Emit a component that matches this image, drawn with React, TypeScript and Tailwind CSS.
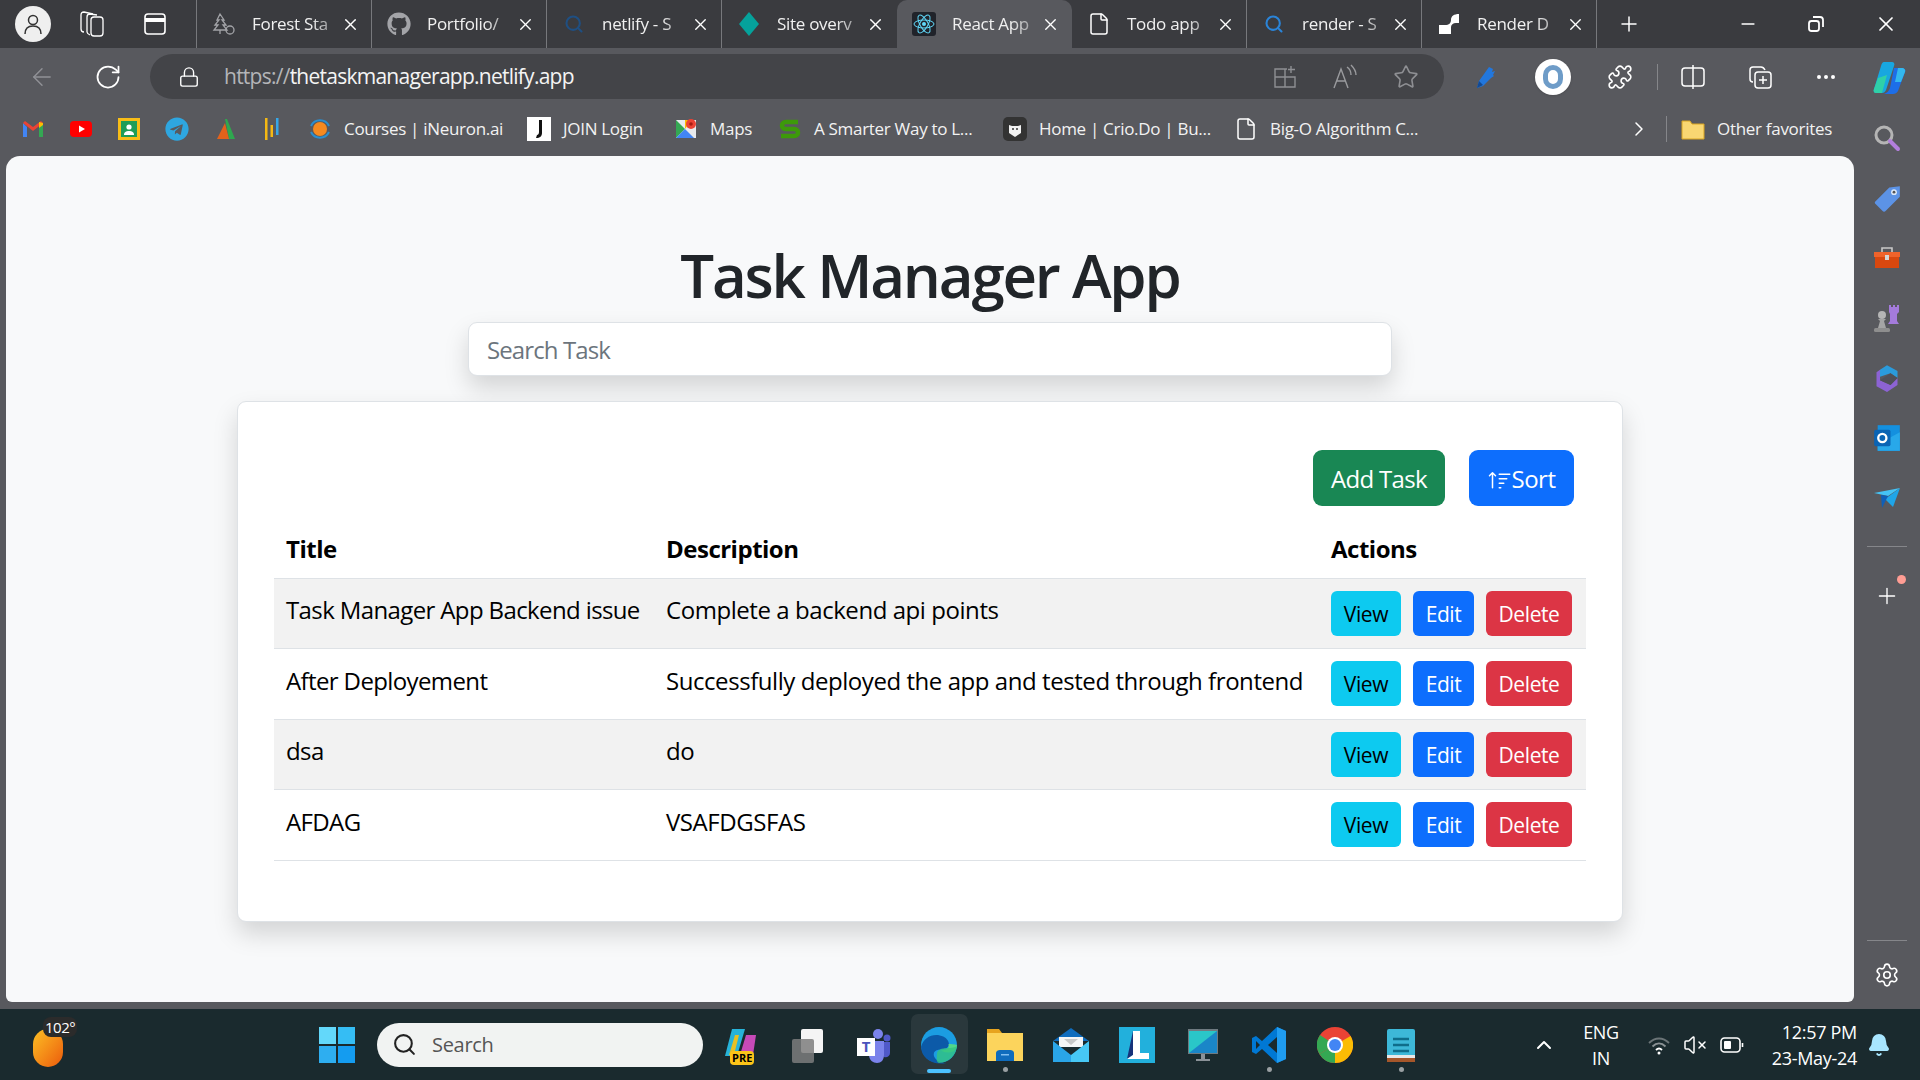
import { type ReactNode } from "react";
import {
  ArrowLeft,
  Bell,
  ChevronRight,
  ChevronUp,
  Ellipsis,
  File,
  Lock,
  Minus,
  Plus,
  Puzzle,
  RotateCw,
  Search,
  Settings,
  Star,
  VolumeX,
  X,
} from "lucide-react";
import { BsSortUp } from "react-icons/bs";
import { FaGithub, FaTelegram } from "react-icons/fa";

type IconProps = { className?: string };

function ReactLogo() {
  return (
    <svg viewBox="0 0 24 24" className="w-6 h-6">
      <rect width="24" height="24" rx="3" fill="#20232a" />
      <g fill="none" stroke="#61dafb" strokeWidth="1">
        <ellipse cx="12" cy="12" rx="10" ry="4" />
        <ellipse cx="12" cy="12" rx="10" ry="4" transform="rotate(60 12 12)" />
        <ellipse cx="12" cy="12" rx="10" ry="4" transform="rotate(120 12 12)" />
      </g>
      <circle cx="12" cy="12" r="2" fill="#61dafb" />
    </svg>
  );
}

function ForestIcon() {
  return (
    <svg viewBox="0 0 24 24" className="w-6 h-6" fill="none" stroke="#a3a4a8" strokeWidth="1.3">
      <path d="M8 2l4 6H10l4 5h-3l4 5H2l4-5H3l4-5H5z" />
      <path d="M8 18v4" />
      <circle cx="18" cy="18" r="4" />
    </svg>
  );
}

function Diamond() {
  return (
    <svg viewBox="0 0 24 24" className="w-6 h-6">
      <path d="M12 0l10 12-10 12L2 12z" fill="#05a29b" />
    </svg>
  );
}

function RenderLogo() {
  return (
    <svg viewBox="0 0 24 24" className="w-6 h-6" fill="#fff">
      <path d="M14 8c0-4 3-6 8-6v9h-3c-3 0-5 2-5 4v7H2v-9h6c4 0 6-2 6-5z" />
    </svg>
  );
}

function SearchTab({ color }: { color: string }) {
  return <Search className="w-5 h-5" color={color} strokeWidth={2.5} />;
}

function Workspaces() {
  return (
    <svg viewBox="0 0 26 28" className="w-[26px] h-[28px]" fill="none" stroke="#fff" strokeWidth="1.3">
      <path d="M14 4L5 2C3 2 2 3 2 5v14c0 2 1 3 3 3" />
      <path d="M18 5l-7-1c-2 0-3 1-3 3v15c0 1 1 2 3 3" />
      <rect x="12" y="7" width="12" height="19" rx="3" />
    </svg>
  );
}

function TabActions() {
  return (
    <svg viewBox="0 0 24 24" className="w-[24px] h-[24px]" fill="none" stroke="#fff" strokeWidth="1.6">
      <rect x="2" y="2" width="20" height="20" rx="3" />
      <path d="M2 8h20" strokeWidth="4" />
    </svg>
  );
}

function RestoreIcon() {
  return (
    <svg viewBox="0 0 18 18" className="w-[18px] h-[18px]" fill="none" stroke="#fff" strokeWidth="1.8">
      <rect x="2" y="6" width="10" height="10" rx="2.5" />
      <path d="M6 2h7c2 0 3 1 3 3v7" />
    </svg>
  );
}

function AppsAdd() {
  return (
    <svg viewBox="0 0 24 24" className="w-6 h-6" fill="none" stroke="#8e8f93" strokeWidth="1.4">
      <path d="M14 4H2v18h20V12H2M12 4v18M18 1v7M15 4.5h7" />
    </svg>
  );
}

function ReadAloud() {
  return (
    <svg viewBox="0 0 26 26" className="w-[26px] h-[26px]" fill="none" stroke="#9a9b9e" strokeWidth="1.4">
      <path d="M2 24L9 5l7 19M5 17h8" />
      <path d="M15 3c3 2 4 5 4 8M19 1c3 3 5 6 5 10" />
    </svg>
  );
}

function SplitScreen() {
  return (
    <svg viewBox="0 0 26 26" className="w-[26px] h-[26px]" fill="none" stroke="#fff" strokeWidth="1.5">
      <rect x="2" y="4" width="22" height="18" rx="3" />
      <path d="M13 1v24" />
    </svg>
  );
}

function Collections() {
  return (
    <svg viewBox="0 0 26 26" className="w-[26px] h-[26px]" fill="none" stroke="#fff" strokeWidth="1.5">
      <path d="M6 18c-2 0-3-1-3-3V6c0-2 1-3 3-3h8c2 0 3 1 4 3" />
      <rect x="8" y="8" width="16" height="16" rx="3" />
      <path d="M16 12v8M12 16h8" />
    </svg>
  );
}

function CopilotLogo({ className = "w-[34px] h-[36px]" }: IconProps) {
  return (
    <svg viewBox="0 0 34 36" className={className}>
      <path d="M12 3h8c2 0 3 2 2 4l-8 24c-1 2-2 3-4 3H4c-2 0-3-2-2-4l7-23c.5-2 1.5-4 3-4z" fill="#18a7e0" />
      <path d="M4 34c-2 0-3-2-2-4l4-11 9-3-5 18z" fill="#2fd0a8" />
      <path d="M22 9h8c2 0 4 2 3 4l-7 19c-1 2-3 3-5 3H12c3-1 5-3 6-6z" fill="#1d6ee8" />
      <path d="M26 9h4c2 0 4 2 3 4l-4 10h-6z" fill="#33b8ee" />
    </svg>
  );
}

function GmailIcon() {
  return (
    <svg viewBox="0 0 24 24" className="w-6 h-6">
      <path d="M2 6v14h4V10z" fill="#4285f4" />
      <path d="M18 10v10h4V6z" fill="#34a853" />
      <path d="M2 6l10 8 10-8-2-2-8 6-8-6z" fill="#ea4335" />
      <path d="M18 5l4 1v2l-4 3z" fill="#fbbc04" />
    </svg>
  );
}

function YoutubeIcon() {
  return (
    <svg viewBox="0 0 24 24" className="w-6 h-6">
      <rect x="1" y="4" width="22" height="16" rx="4" fill="#f00" />
      <path d="M10 8.5l6 3.5-6 3.5z" fill="#fff" />
    </svg>
  );
}

function ClassroomIcon() {
  return (
    <svg viewBox="0 0 24 24" className="w-6 h-6">
      <rect x="1" y="1" width="22" height="22" fill="#f8bd17" />
      <rect x="4" y="4" width="16" height="16" fill="#1f9d58" />
      <circle cx="12" cy="10" r="2.6" fill="#fff" />
      <path d="M7 18c0-3 2-4 5-4s5 1 5 4z" fill="#fff" />
    </svg>
  );
}

function PyramidIcon() {
  return (
    <svg viewBox="0 0 24 24" className="w-6 h-6">
      <path d="M12 2l2 0 8 20h-6z" fill="#2fa84f" />
      <path d="M12 6L4 22h12z" fill="#e2621b" />
    </svg>
  );
}

function BarsIcon() {
  return (
    <svg viewBox="0 0 24 24" className="w-6 h-6">
      <rect x="5" y="1" width="2.5" height="22" fill="#f5b914" />
      <rect x="16" y="1" width="2.5" height="17" fill="#35a7e8" />
      <rect x="10.5" y="8" width="2.5" height="12" fill="#f5b914" />
    </svg>
  );
}

function INeuronIcon() {
  return (
    <svg viewBox="0 0 24 24" className="w-6 h-6">
      <circle cx="12" cy="12" r="7" fill="#f58a1f" />
      <path d="M3 9a10 10 0 0 1 18 0M3 15a10 10 0 0 0 18 0" fill="none" stroke="#2a8fd0" strokeWidth="2" />
    </svg>
  );
}

function JoinIcon() {
  return (
    <svg viewBox="0 0 24 24" className="w-6 h-6">
      <rect width="24" height="24" fill="#fff" />
      <path d="M15 3v13c0 3-2 5-6 5l1-3c1 0 2-1 2-3V3z" fill="#111" />
    </svg>
  );
}

function MapsIcon() {
  return (
    <svg viewBox="0 0 24 24" className="w-6 h-6">
      <path d="M2 3h20v18H2z" fill="#e8eaed" />
      <path d="M2 3l9 9-9 9z" fill="#34a853" />
      <path d="M2 21l9-9 9 9z" fill="#4285f4" />
      <path d="M11 12l7-9h-7z" fill="#fbbc04" />
      <circle cx="17" cy="7" r="5" fill="#ea4335" />
      <circle cx="17" cy="7" r="1.8" fill="#a61c14" />
    </svg>
  );
}

function GreenSIcon() {
  return (
    <svg viewBox="0 0 24 24" className="w-6 h-6" fill="none" stroke="#3d9a0a" strokeWidth="4.5">
      <path d="M20 5H8c-3 0-4 2-4 3.5S5 12 8 12h8c3 0 4 2 4 3.5S19 19 16 19H3" />
    </svg>
  );
}

function CrioIcon() {
  return (
    <svg viewBox="0 0 24 24" className="w-6 h-6">
      <rect width="24" height="24" rx="5" fill="#333" />
      <path d="M6 8l3 1h6l3-1v8l-6 4-6-4z" fill="#f2f2f2" />
      <circle cx="10" cy="12" r="1" fill="#333" />
      <circle cx="14" cy="12" r="1" fill="#333" />
    </svg>
  );
}

function FolderIcon() {
  return (
    <svg viewBox="0 0 24 24" className="w-6 h-6">
      <path d="M1 4h8l2 3h12v15H1z" fill="#f9d772" stroke="#d9a520" />
    </svg>
  );
}

function PenIcon() {
  return (
    <svg viewBox="0 0 24 24" className="w-6 h-6">
      <path d="M4 23l2-7L16 2l4 2-1 3 3-1-2 4 1 1-3 2-8 8z" fill="#2277dd" />
      <path d="M4 23l2-7 4 4z" fill="#134a94" />
    </svg>
  );
}

function RingIcon() {
  return (
    <div className="w-[36px] h-[36px] rounded-full bg-white flex items-center justify-center shadow">
      <div className="w-[20px] h-[24px] rounded-full border-[5px] border-[#6e9cc8]" />
    </div>
  );
}

function Tag() {
  return (
    <svg viewBox="0 0 24 24" className="w-7 h-7">
      <path d="M2 15L14 3l9-1v9L11 23c-1 1-2 1-3 0l-6-6c-.6-.6-.6-1.4 0-2z" fill="#5c93e6" />
      <circle cx="18" cy="7" r="2.5" fill="#dde9f8" />
      <circle cx="18" cy="7" r="1.2" fill="#555" />
    </svg>
  );
}

function Toolbox() {
  return (
    <svg viewBox="0 0 28 24" className="w-7 h-6">
      <path d="M9 6V2h10v4" fill="none" stroke="#c9c9c9" strokeWidth="1.6" />
      <path d="M1 6h26v5H1z" fill="#f0632b" />
      <path d="M2 11h24v11H2z" fill="#d9480f" />
      <rect x="12" y="9" width="4" height="5" fill="#d6d6d6" />
    </svg>
  );
}

function Chess() {
  return (
    <svg viewBox="0 0 28 28" className="w-7 h-7">
      <path d="M16 1h2v2h2V1h2v2h2V1h2v7l-2 2v7l2 3H15l2-3v-7l-1-2z" fill="#a47bdc" />
      <circle cx="9" cy="11" r="4" fill="#b5b5b5" />
      <path d="M5 15h8l-2 2 2 7H5l2-7z" fill="#a5a5a5" />
      <rect x="1" y="24" width="16" height="4" rx="1.5" fill="#8e8e8e" />
    </svg>
  );
}

function M365() {
  return (
    <svg viewBox="0 0 24 24" className="w-7 h-7">
      <path d="M12 1l9 5v6l-6-4-9 3V5z" fill="#2a9bdc" />
      <path d="M3 7l3-2v9l9 4 6-6v6l-9 6-9-5z" fill="#8c63d4" />
      <path d="M15 8l6 4-6 6-9-4z" fill="#4f5058" />
    </svg>
  );
}

function Outlook() {
  return (
    <svg viewBox="0 0 24 24" className="w-7 h-7">
      <path d="M4 1h19v22H4z" fill="#1490df" />
      <path d="M12 13l11-6v16H4v-7z" fill="#28a8ea" />
      <rect x="1" y="5" width="14" height="14" rx="1.5" fill="#0a64b4" />
      <circle cx="8" cy="12" r="3.5" fill="none" stroke="#fff" strokeWidth="2" />
    </svg>
  );
}

function Paper() {
  return (
    <svg viewBox="0 0 28 24" className="w-7 h-6">
      <path d="M1 7l26-5-12 8z" fill="#45c3f5" />
      <path d="M27 2L20 21l-8-8z" fill="#1fa5e8" />
      <path d="M8 9l7 1-6 12z" fill="#0f5fb8" />
    </svg>
  );
}

function Windows() {
  return (
    <svg viewBox="0 0 36 36" className="w-[36px] h-[36px]">
      <path d="M0 0h17v17H0z" fill="#63d8fa" />
      <path d="M19 0h17v17H19z" fill="#35bdf4" />
      <path d="M0 19h17v17H0z" fill="#2eaef0" />
      <path d="M19 19h17v17H19z" fill="#149cf0" />
    </svg>
  );
}

function CopilotPre() {
  return (
    <div className="relative w-9 h-9">
      <svg viewBox="0 0 36 36" className="w-9 h-9">
        <path d="M9 2h13l-8 27H2z" fill="#27b3d9" />
        <path d="M6 28L12 8h4l-5 20z" fill="#e8c023" />
        <path d="M23 8h10l-3 20H17z" fill="#c64ab8" />
      </svg>
      <span className="absolute left-[7px] top-[24px] bg-[#fcc419] text-black text-[11px] leading-[14px] font-bold px-[2px] rounded-sm">PRE</span>
    </div>
  );
}

function TaskView() {
  return (
    <svg viewBox="0 0 36 36" className="w-9 h-9">
      <rect x="12" y="2" width="22" height="24" rx="2" fill="#f4f4f4" />
      <rect x="3" y="12" width="22" height="24" rx="2" fill="#7d7d7d" fillOpacity=".85" />
    </svg>
  );
}

function Teams() {
  return (
    <svg viewBox="0 0 36 36" className="w-9 h-9">
      <circle cx="23" cy="7" r="5" fill="#7b83eb" />
      <circle cx="32" cy="11" r="3.5" fill="#5059c9" />
      <path d="M27 15h8v11c0 3-3 5-6 4z" fill="#5059c9" />
      <path d="M14 14h15v14c0 5-3 8-7 8s-8-3-8-8z" fill="#7b83eb" />
      <rect x="2" y="11" width="18" height="18" fill="#fff" />
      <text x="11" y="25" textAnchor="middle" fontSize="15" fontWeight="700" fill="#4b53bc" fontFamily="Open Sans">T</text>
    </svg>
  );
}

function Edge() {
  return (
    <svg viewBox="0 0 36 36" className="w-[38px] h-[38px]">
      <circle cx="18" cy="18" r="17" fill="#1b9de2" />
      <path d="M1 20C3 10 14 6 22 10c6 3 7 9 3 11-4 2-12 0-12 6 0 4 5 8 12 8C12 38 1 30 1 20z" fill="#0c5aa8" />
      <path d="M35 18c0 4-3 7-8 7-4 0-6-1-7-2 6 0 8-3 7-6 2 0 6 0 8 1z" fill="#51d88a" />
      <path d="M16 27c0-5 5-6 9-6 5 0 9-1 10-2-1 9-8 16-17 16-3-1-2-4-2-8z" fill="#33c481" fillOpacity=".8" />
    </svg>
  );
}

function FileExplorer() {
  return (
    <svg viewBox="0 0 36 36" className="w-9 h-9">
      <path d="M0 2h12l3 4h21v28H0z" fill="#e7a41f" />
      <path d="M0 6h36v28H0z" fill="#fcd45c" />
      <path d="M9 26c0-2 2-3 4-3h10c2 0 4 1 4 3v8H9z" fill="#0f6cbd" />
      <rect x="14" y="27" width="8" height="1.5" fill="#80bdf0" />
    </svg>
  );
}

function Mail() {
  return (
    <svg viewBox="0 0 36 36" className="w-9 h-9">
      <path d="M18 1L0 14h36z" fill="#0f6cbd" />
      <path d="M6 10h24v10H6z" fill="#f5f5f5" />
      <path d="M11 12h14l-7 6z" fill="#c8c8c8" />
      <path d="M0 14l18 14v7H0z" fill="#2aa5e8" />
      <path d="M36 14L18 28v7h18z" fill="#47c8f5" />
    </svg>
  );
}

function LIcon() {
  return (
    <svg viewBox="0 0 36 36" className="w-9 h-9">
      <rect width="36" height="36" fill="#22b0dc" />
      <path d="M8 32L14 4v24z" fill="#16327a" />
      <path d="M14 4h7v22h9v6H8l6-4z" fill="#fff" />
    </svg>
  );
}

function Monitor() {
  return (
    <svg viewBox="0 0 36 36" className="w-9 h-9">
      <rect x="3" y="2" width="30" height="25" fill="#6f7a80" />
      <rect x="4" y="4" width="28" height="22" fill="#2ac6c8" />
      <path d="M32 4v22H4z" fill="#1a86c8" />
      <rect x="16" y="27" width="4" height="5" fill="#8b9298" />
      <rect x="11" y="32" width="14" height="2" fill="#8b9298" />
    </svg>
  );
}

function VsCode() {
  return (
    <svg viewBox="0 0 36 36" className="w-9 h-9">
      <path d="M26 0l9 4v28l-9 4-15-14-6 5-4-2V11l4-2 6 5z" fill="#0078d4" />
      <path d="M26 0l9 4v28l-9 4z" fill="#1f9cf0" />
      <path d="M26 10l-9 8 9 8z" fill="#1a2a2e" />
      <path d="M5 14v8l4-4z" fill="#1a2a2e" />
    </svg>
  );
}

function Chrome() {
  return (
    <svg viewBox="0 0 36 36" className="w-9 h-9">
      <circle cx="18" cy="18" r="18" fill="#ea4335" />
      <path d="M18 18L2.4 27A18 18 0 0 1 3 8z" fill="#34a853" />
      <path d="M18 18l15.6-9A18 18 0 0 1 18 36L10 27z" fill="#fbbc04" />
      <path d="M18 18L2.4 27A18 18 0 0 0 18 36z" fill="#34a853" />
      <circle cx="18" cy="18" r="8" fill="#fff" />
      <circle cx="18" cy="18" r="6" fill="#4285f4" />
    </svg>
  );
}

function Notepad() {
  return (
    <svg viewBox="0 0 36 36" className="w-9 h-9">
      <rect x="4" y="2" width="28" height="30" rx="2" fill="#3db8d8" />
      <rect x="4" y="30" width="28" height="5" fill="#a5562a" />
      <rect x="4" y="28" width="28" height="3" fill="#e8e8e8" />
      <path d="M10 12h16M10 18h16M10 24h16" stroke="#0f6d8a" strokeWidth="2.5" />
    </svg>
  );
}

function WifiDim() {
  return (
    <svg viewBox="0 0 24 24" className="w-[24px] h-[24px]" fill="none" strokeWidth="1.8">
      <path d="M2 10c6-6 14-6 20 0" stroke="#6b7477" />
      <path d="M5.5 13.5c4-4 9-4 13 0" stroke="#8a9194" />
      <path d="M9 17c2-2 4-2 6 0" stroke="#fff" />
      <circle cx="12" cy="20" r="1.5" fill="#fff" stroke="none" />
    </svg>
  );
}

function Battery() {
  return (
    <svg viewBox="0 0 26 24" className="w-[26px] h-[24px]" fill="none" stroke="#fff" strokeWidth="1.6">
      <rect x="2" y="5" width="19" height="14" rx="3.5" />
      <path d="M23.5 10v4" />
      <rect x="5" y="8" width="7" height="8" rx="1" fill="#fff" stroke="none" />
    </svg>
  );
}

function Tab({ icon, title, active, noSep }: { icon: ReactNode; title: string; active?: boolean; noSep?: boolean }) {
  return (
    <div
      className={`w-[175px] h-full shrink-0 flex items-center pl-[15px] pr-[10px] ${
        active ? "bg-[#58595e] rounded-t-[10px]" : ""
      } ${noSep ? "" : "border-r border-[#77787c]"}`}
    >
      <div className="w-[24px] h-[24px] flex items-center justify-center shrink-0">{icon}</div>
      <div className="w-[84px] ml-[16px] overflow-hidden whitespace-nowrap text-[17px] tracking-[-0.3px] text-[#f0f0f0] [mask-image:linear-gradient(to_right,black_70%,rgba(0,0,0,0.35))]">
        {title}
      </div>
      <X className="w-[19px] h-[19px] ml-[5px] text-white shrink-0" strokeWidth={1.75} />
    </div>
  );
}

function Fav({ icon, label, width }: { icon: ReactNode; label?: string; width: string }) {
  return (
    <div className={`flex items-center shrink-0 ${width}`}>
      <div className="w-[48px] flex items-center justify-center shrink-0">{icon}</div>
      {label && <span className="whitespace-nowrap text-[17px] tracking-[-0.3px] text-[#f2f2f2]">{label}</span>}
    </div>
  );
}

function ToolButton({ children, width = "w-[66px]" }: { children: ReactNode; width?: string }) {
  return <div className={`${width} h-full flex items-center justify-center shrink-0`}>{children}</div>;
}

function TaskApp({ children, dot }: { children: ReactNode; dot?: boolean }) {
  return (
    <div className="relative w-[66px] h-full flex items-center justify-center shrink-0">
      {children}
      {dot && <span className="absolute bottom-[8px] w-[5px] h-[5px] rounded-full bg-[#9aa0a3]" />}
    </div>
  );
}

const tasks = [
  { title: "Task Manager App Backend issue", description: "Complete a backend api points" },
  { title: "After Deployement", description: "Successfully deployed the app and tested through frontend" },
  { title: "dsa", description: "do" },
  { title: "AFDAG", description: "VSAFDGSFAS" },
];

function SideIcon({ children }: { children: ReactNode }) {
  return <div className="h-[60px] flex items-center justify-center">{children}</div>;
}

export default function App() {
  return (
    <div className="w-[1920px] h-[1080px] overflow-hidden flex flex-col bg-[#58595e] [font-family:'Open_Sans',sans-serif]">
      {/* tab strip */}
      <div className="h-[48px] bg-[#3a3b3f] flex items-center shrink-0">
        <div className="w-[197px] h-full flex items-center shrink-0 border-r border-[#77787c]">
          <div className="ml-[15px] w-[36px] h-[36px] rounded-full bg-[#efefef] flex items-center justify-center">
            <svg viewBox="0 0 24 24" className="w-6 h-6" fill="none" stroke="#333" strokeWidth="1.5">
              <circle cx="12" cy="8" r="4.5" />
              <path d="M4 22c0-5 3-8 8-8s8 3 8 8" />
            </svg>
          </div>
          <div className="ml-[28px]">
            <Workspaces />
          </div>
          <div className="ml-[38px]">
            <TabActions />
          </div>
        </div>
        <Tab icon={<ForestIcon />} title="Forest Sta" />
        <Tab icon={<FaGithub className="w-6 h-6 text-[#a3a4a8]" />} title="Portfolio/" />
        <Tab icon={<SearchTab color="#1f4f82" />} title="netlify - S" />
        <Tab icon={<Diamond />} title="Site overv" noSep />
        <Tab icon={<ReactLogo />} title="React App" active noSep />
        <Tab icon={<File className="w-6 h-6 text-white" strokeWidth={1.5} />} title="Todo app" />
        <Tab icon={<SearchTab color="#2a84d8" />} title="render - S" />
        <Tab icon={<RenderLogo />} title="Render D" />
        <Plus className="ml-[20px] w-[24px] h-[24px] text-white" strokeWidth={1.5} />
        <Minus className="ml-[97px] w-[20px] h-[20px] text-white" strokeWidth={2} />
        <div className="ml-[49px]">
          <RestoreIcon />
        </div>
        <X className="ml-[49px] w-[24px] h-[24px] text-white" strokeWidth={1.75} />
      </div>

      {/* address bar */}
      <div className="h-[57px] flex items-center shrink-0">
        <ArrowLeft className="ml-[28px] w-[28px] h-[28px] text-[#909196]" strokeWidth={1.25} />
        <RotateCw className="ml-[38px] w-[28px] h-[28px] text-white" strokeWidth={1.5} />
        <div className="ml-[28px] w-[1294px] h-[45px] rounded-full bg-[#434448] flex items-center">
          <Lock className="ml-[28px] w-[22px] h-[22px] text-white" strokeWidth={1.5} />
          <span className="ml-[24px] text-[21px] tracking-[-0.75px] text-[#f4f4f4]">
            <span className="text-[#b4b5b8]">https://</span>thetaskmanagerapp.netlify.app
          </span>
          <div className="ml-auto flex items-center pr-[25px] gap-[35px]">
            <AppsAdd />
            <ReadAloud />
            <Star className="w-[26px] h-[26px] text-[#8e8f93]" strokeWidth={1.5} />
          </div>
        </div>
        <ToolButton width="w-[82px]">
          <PenIcon />
        </ToolButton>
        <ToolButton width="w-[54px]">
          <RingIcon />
        </ToolButton>
        <ToolButton width="w-[80px]">
          <Puzzle className="w-[26px] h-[26px] text-white" strokeWidth={1.5} />
        </ToolButton>
        <div className="w-px h-[26px] bg-[#85868a] -ml-[3px]" />
        <ToolButton width="w-[70px]">
          <SplitScreen />
        </ToolButton>
        <ToolButton width="w-[64px]">
          <Collections />
        </ToolButton>
        <ToolButton width="w-[68px]">
          <Ellipsis className="w-[24px] h-[24px] text-white" />
        </ToolButton>
        <ToolButton width="w-[58px]">
          <CopilotLogo />
        </ToolButton>
      </div>

      {/* favorites bar */}
      <div className="h-[51px] flex items-center pl-[9px] pb-[4px] shrink-0">
        <Fav icon={<GmailIcon />} width="w-[48px]" />
        <Fav icon={<YoutubeIcon />} width="w-[48px]" />
        <Fav icon={<ClassroomIcon />} width="w-[48px]" />
        <Fav icon={<FaTelegram className="w-6 h-6 text-[#2ea6e0]" />} width="w-[48px]" />
        <Fav icon={<PyramidIcon />} width="w-[47px]" />
        <Fav icon={<BarsIcon />} width="w-[48px]" />
        <Fav icon={<INeuronIcon />} label="Courses | iNeuron.ai" width="w-[219px]" />
        <Fav icon={<JoinIcon />} label="JOIN Login" width="w-[147px]" />
        <Fav icon={<MapsIcon />} label="Maps" width="w-[104px]" />
        <Fav icon={<GreenSIcon />} label="A Smarter Way to L..." width="w-[225px]" />
        <Fav icon={<CrioIcon />} label="Home | Crio.Do | Bu..." width="w-[231px]" />
        <Fav icon={<File className="w-6 h-6 text-white" strokeWidth={1.5} />} label="Big-O Algorithm C..." width="w-[391px]" />
        <ChevronRight className="ml-[14px] w-[24px] h-[24px] text-white shrink-0" strokeWidth={1.5} />
        <div className="ml-[15px] w-px h-[26px] bg-[#85868a] shrink-0" />
        <div className="ml-[2px]">
          <Fav icon={<FolderIcon />} label="Other favorites" width="w-[190px]" />
        </div>
      </div>

      {/* page and side panel */}
      <div className="flex-1 flex min-h-0">
        <div className="ml-[6px] w-[1848px] h-[846px] bg-[#f8f9fa] rounded-t-[14px] rounded-b-[6px] flex flex-col items-center pt-[83px] shrink-0">
          <h1 className="text-[60px] leading-[72px] font-semibold text-[#212529] tracking-[-2.2px] mb-[11px]">Task Manager App</h1>
          <input
            placeholder="Search Task"
            className="w-[924px] h-[54px] shrink-0 px-[18px] text-[24px] bg-white border border-[#dee2e6] rounded-[9px] shadow-[0_12px_24px_rgba(0,0,0,0.15)] placeholder:text-[#6c757d] tracking-[-0.9px]"
          />
          <div className="mt-[25px] w-[1386px] h-[521px] shrink-0 bg-white border border-[#dee2e6] rounded-[9px] shadow-[0_12px_24px_rgba(0,0,0,0.15)] px-[36px] pt-[48px]">
            <div className="flex justify-end gap-[24px] pr-[12px]">
              <button className="w-[132px] h-[56px] pt-[2px] rounded-[9px] bg-[#198754] text-white text-[24px] tracking-[-0.7px]">Add Task</button>
              <button className="w-[105px] h-[56px] pt-[2px] rounded-[9px] bg-[#0d6efd] text-white text-[24px] tracking-[-0.5px] flex items-center justify-center">
                <BsSortUp className="w-[24px] h-[24px] mt-[3px]" />
                Sort
              </button>
            </div>
            <table className="mt-[14px] w-[1312px] border-collapse text-black text-[24px] tracking-[-0.5px]">
              <thead>
                <tr className="h-[58px] border-b border-[#dee2e6] text-left">
                  <th className="w-[380px] pl-[12px] font-bold">Title</th>
                  <th className="w-[665px] pl-[12px] font-bold">Description</th>
                  <th className="pl-[12px] font-bold">Actions</th>
                </tr>
              </thead>
              <tbody>
                {tasks.map((task, index) => (
                  <tr key={task.title} className={`h-[70.5px] border-b border-[#dee2e6] ${index % 2 === 0 ? "bg-[#f2f2f2]" : ""}`}>
                    <td className="pl-[12px] pb-[6px] whitespace-nowrap tracking-[-0.62px]">{task.title}</td>
                    <td className="pl-[12px] pb-[6px] whitespace-nowrap tracking-[-0.44px]">{task.description}</td>
                    <td className="pl-[12px]">
                      <div className="flex gap-[12px] text-[21px] tracking-[-0.4px]">
                        <button className="w-[70px] h-[45px] pt-[2px] rounded-[6px] bg-[#0dcaf0] text-black">View</button>
                        <button className="w-[61px] h-[45px] pt-[2px] rounded-[6px] bg-[#0d6efd] text-white">Edit</button>
                        <button className="w-[86px] h-[45px] pt-[2px] rounded-[6px] bg-[#dc3545] text-white">Delete</button>
                      </div>
                    </td>
                  </tr>
                ))}
              </tbody>
            </table>
          </div>
        </div>
        <div className="w-[66px] flex flex-col shrink-0">
          <div className="flex flex-col -mt-[48px]">
            <SideIcon>
              <svg viewBox="0 0 28 28" className="w-7 h-7" fill="none">
                <circle cx="11" cy="11" r="8" stroke="#b5b5b5" strokeWidth="3" />
                <path d="M17 17l8 8" stroke="#b37fdc" strokeWidth="4" strokeLinecap="round" />
              </svg>
            </SideIcon>
            <SideIcon>
              <Tag />
            </SideIcon>
            <SideIcon>
              <Toolbox />
            </SideIcon>
            <SideIcon>
              <Chess />
            </SideIcon>
            <SideIcon>
              <M365 />
            </SideIcon>
            <SideIcon>
              <Outlook />
            </SideIcon>
            <SideIcon>
              <Paper />
            </SideIcon>
          </div>
          <div className="mx-[13px] mt-[18px] h-px bg-[#85868a]" />
          <div className="relative h-[98px] flex items-center justify-center">
            <Plus className="w-[26px] h-[26px] text-white" strokeWidth={1.25} />
            <span className="absolute right-[14px] top-[28px] w-[9px] h-[9px] rounded-full bg-[#ff9d94]" />
          </div>
          <div className="mt-auto mx-[13px] h-px bg-[#85868a]" />
          <div className="h-[68px] flex items-center justify-center">
            <Settings className="w-[26px] h-[26px] text-white" strokeWidth={1.5} />
          </div>
        </div>
      </div>

      {/* taskbar */}
      <div className="h-[71px] bg-[#1a2a2e] flex items-center shrink-0 relative">
        <div className="w-[317px] h-full shrink-0 relative">
          <div className="absolute left-[33px] top-[20px] w-[30px] h-[38px] rounded-full bg-gradient-to-br from-[#fbbf24] to-[#ea580c]" />
          <span className="absolute left-[43px] top-[8px] bg-[#2b2b2b] rounded-[8px] px-[2px] text-[15px] leading-[20px] text-white tracking-[-0.5px]">102°</span>
        </div>
        <div className="w-[40px] flex justify-center shrink-0">
          <Windows />
        </div>
        <div className="ml-[20px] w-[326px] h-[44px] rounded-full bg-[#f1f3f2] flex items-center shrink-0">
          <Search className="ml-[15px] w-[25px] h-[25px] text-[#222]" strokeWidth={2} />
          <span className="ml-[15px] text-[20px] text-[#555] tracking-[-0.3px]">Search</span>
        </div>
        <div className="ml-[5px] flex h-full shrink-0">
          <TaskApp>
            <CopilotPre />
          </TaskApp>
          <TaskApp>
            <TaskView />
          </TaskApp>
          <TaskApp>
            <Teams />
          </TaskApp>
          <div className="relative w-[66px] h-full flex items-center justify-center">
            <div className="absolute left-[5px] top-[5px] w-[57px] h-[60px] rounded-[7px] bg-[#2a383c]" />
            <div className="relative">
              <Edge />
            </div>
            <span className="absolute bottom-[7px] w-[24px] h-[4px] rounded-full bg-[#4cc2ff]" />
          </div>
          <TaskApp dot>
            <FileExplorer />
          </TaskApp>
          <TaskApp>
            <Mail />
          </TaskApp>
          <TaskApp>
            <LIcon />
          </TaskApp>
          <TaskApp>
            <Monitor />
          </TaskApp>
          <TaskApp dot>
            <VsCode />
          </TaskApp>
          <TaskApp>
            <Chrome />
          </TaskApp>
          <TaskApp dot>
            <Notepad />
          </TaskApp>
        </div>
        <ChevronUp className="ml-[98px] w-[24px] h-[24px] text-white shrink-0" strokeWidth={2} />
        <div className="ml-[14px] w-[62px] text-center text-[18px] leading-[26px] tracking-[-0.3px] text-white shrink-0">
          <div>ENG</div>
          <div>IN</div>
        </div>
        <div className="ml-[15px] shrink-0">
          <WifiDim />
        </div>
        <VolumeX className="ml-[12px] w-[24px] h-[24px] text-white shrink-0" strokeWidth={1.5} />
        <div className="ml-[12px] shrink-0">
          <Battery />
        </div>
        <div className="w-[112px] text-right text-[18px] leading-[26px] text-white shrink-0 tracking-[-0.3px]">
          <div>12:57 PM</div>
          <div>23-May-24</div>
        </div>
        <Bell className="ml-[10px] w-[24px] h-[24px] text-[#a8e6ff] fill-[#a8e6ff] shrink-0" />
      </div>
    </div>
  );
}
